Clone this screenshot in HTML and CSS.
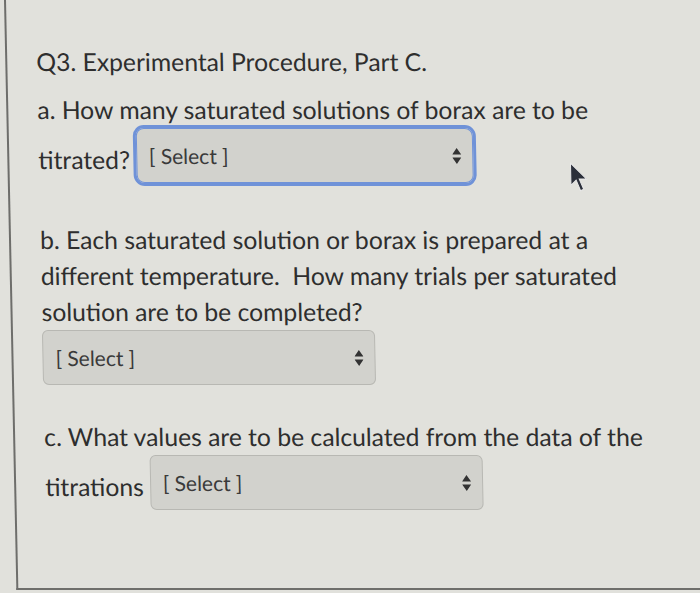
FILE: index.html
```html
<!DOCTYPE html>
<html lang="en">
<head>
  <meta charset="UTF-8" />
  <title>Q3. Experimental Procedure, Part C.</title>
  <link rel="stylesheet" href="styles.css">
</head>
<body>
  <div class="page">
    <h2 class="title">Q3. Experimental Procedure, Part C.</h2>

    <p class="prompt">a. How many saturated solutions of borax are to be</p>
    <div class="answer-row">
      <span class="label">titrated?</span>
      <div class="select select-focus">
        <span>[ Select ]</span>
        <svg class="arrows" width="9" height="16" viewBox="0 0 9 16"><path d="M4.5 0 L9 6.5 L0 6.5 Z M0 9.5 L9 9.5 L4.5 16 Z" /></svg>
      </div>
    </div>

    <p class="prompt prompt-b">b. Each saturated solution or borax is prepared at a different temperature.&nbsp; How many trials per saturated solution are to be completed?</p>
    <div class="select">
      <span>[ Select ]</span>
      <svg class="arrows" width="9" height="16" viewBox="0 0 9 16"><path d="M4.5 0 L9 6.5 L0 6.5 Z M0 9.5 L9 9.5 L4.5 16 Z" /></svg>
    </div>

    <p class="prompt prompt-c">c. What values are to be calculated from the data of the</p>
    <div class="answer-row">
      <span class="label">titrations</span>
      <div class="select">
        <span>[ Select ]</span>
        <svg class="arrows" width="9" height="16" viewBox="0 0 9 16"><path d="M4.5 0 L9 6.5 L0 6.5 Z M0 9.5 L9 9.5 L4.5 16 Z" /></svg>
      </div>
    </div>

    <!-- mouse pointer over the page -->
    <svg class="cursor" width="18" height="30" viewBox="0 0 17 28">
      <path d="M1 1 L1 22 L6 17 L10 27 L13 25.5 L9 16 L16 16 Z" fill="#2b2f3a" stroke="#e8e8e8" stroke-width="1" />
    </svg>
  </div>
</body>
</html>
```

FILE: styles.css
```css
body {
  margin: 0;
  background: #e1e1dc;
  font-family: Lato, "Open Sans", sans-serif;
  color: #2e2e2e;
  overflow: hidden;
}

.page {
  position: relative;
  margin-left: 4px;
  height: 544px;
  padding: 44px 0 0 29px;
  border-left: 2px solid #6e6e6b;
  border-bottom: 2px solid #6e6e6b;
  transform: skewX(1.2deg);
  transform-origin: top left;
}

.title {
  margin: 0 0 12px;
  font-size: 24.7px;
  font-weight: normal;
  line-height: 36px;
}

.prompt {
  margin: 0;
  font-size: 24.7px;
  line-height: 36px;
}

.prompt-b {
  width: 600px;
  margin-top: 39px;
}

.prompt-c {
  margin-top: 34px;
}

.answer-row {
  display: flex;
  align-items: center;
  gap: 6px;
}

.label {
  font-size: 24.7px;
  line-height: 36px;
  padding-top: 8px;
}

.select {
  display: flex;
  align-items: center;
  justify-content: space-between;
  box-sizing: border-box;
  width: 333px;
  height: 55px;
  padding: 0 11px 0 12px;
  background: #d2d2cd;
  border: 1px solid #b8b8b3;
  border-radius: 6px;
  font-size: 21px;
  color: #3a3a3a;
}

.select-focus {
  width: 337px;
  outline: 3px solid #6f92d8;
  outline-offset: 0;
  border-color: #6f92d8;
  border-radius: 8px;
}

.arrows {
  fill: #333;
}

.cursor {
  position: absolute;
  left: 560px;
  top: 162px;
}
```
